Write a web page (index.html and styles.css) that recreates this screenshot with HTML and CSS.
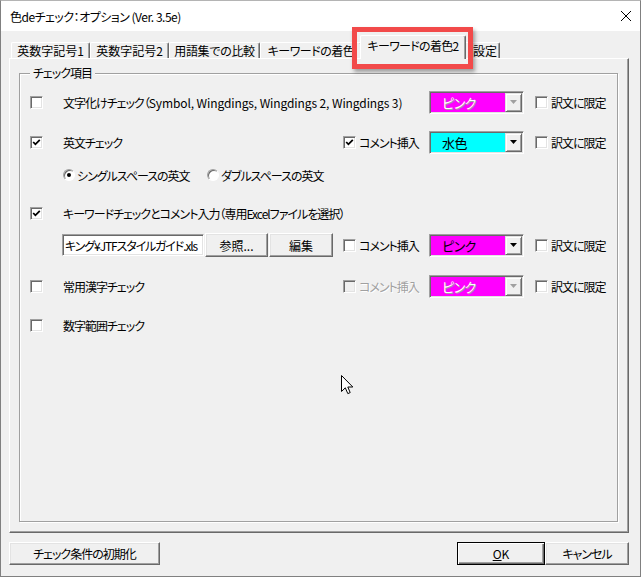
FILE: index.html
```html
<!DOCTYPE html>
<html lang="ja">
<head>
  <meta charset="UTF-8">
  <title>色deチェック：オプション</title>
  <link rel="stylesheet" href="styles.css">
</head>
<body>

  <div class="window">
    <div class="titlebar">
      <span class="title">色deチェック：オプション (Ver. 3.5e)</span>
      <svg class="close" width="12" height="12" viewBox="0 0 12 12"><path d="M1 1L11 11M11 1L1 11" stroke="#000" stroke-width="1"/></svg>
    </div>

    <div class="tabs">
      <div class="tab t1">英数字記号1</div>
      <div class="tab t2">英数字記号2</div>
      <div class="tab t3">用語集での比較</div>
      <div class="tab t4">キーワードの着色</div>
      <div class="tab active">キーワードの着色2</div>
      <div class="tab t6">設定</div>
    </div>

    <div class="panel">
      <div class="group">
        <span class="legend">チェック項目</span>
        <div class="grid">
          <!-- 文字化け -->
          <div class="cell c1"><span class="cb"></span></div>
          <div class="cell c2 wide2">文字化けチェック（<span class="latin">Symbol, Wingdings, Wingdings 2, Wingdings 3)</span></div>
          <div class="cell c4">
            <div class="combo pink disabled"><span class="val">ピンク</span><span class="drop"><svg width="7" height="4" viewBox="0 0 7 4"><path d="M0 0H7L3.5 4Z"/></svg></span></div>
          </div>
          <div class="cell c5"><span class="cb"></span><span class="lbl">訳文に限定</span></div>

          <!-- 英文 -->
          <div class="cell c1"><span class="cb"><svg width="9" height="9" viewBox="0 0 9 9"><polyline points="1.2,4 3.4,6.3 7.8,1.8" fill="none" stroke="#000" stroke-width="1.8"/></svg></span></div>
          <div class="cell c2">英文チェック</div>
          <div class="cell c3"><span class="cb"><svg width="9" height="9" viewBox="0 0 9 9"><polyline points="1.2,4 3.4,6.3 7.8,1.8" fill="none" stroke="#000" stroke-width="1.8"/></svg></span><span class="lbl">コメント挿入</span></div>
          <div class="cell c4">
            <div class="combo cyan"><span class="val">水色</span><span class="drop"><svg width="7" height="4" viewBox="0 0 7 4"><path d="M0 0H7L3.5 4Z"/></svg></span></div>
          </div>
          <div class="cell c5"><span class="cb"></span><span class="lbl">訳文に限定</span></div>

          <!-- スペース -->
          <div class="cell c2 wide4">
            <span class="opt first"><span class="radio on"></span><span class="lbl">シングルスペースの英文</span></span>
            <span class="opt"><span class="radio"></span><span class="lbl">ダブルスペースの英文</span></span>
          </div>

          <!-- キーワード -->
          <div class="cell c1"><span class="cb"><svg width="9" height="9" viewBox="0 0 9 9"><polyline points="1.2,4 3.4,6.3 7.8,1.8" fill="none" stroke="#000" stroke-width="1.8"/></svg></span></div>
          <div class="cell c2 wide4">キーワードチェックとコメント入力（専用Excelファイルを選択）</div>

          <div class="cell c2">
            <div class="field">キング¥JTFスタイルガイド.xls</div>
            <button class="btn browse">参照...</button>
            <button class="btn edit">編集</button>
          </div>
          <div class="cell c3"><span class="cb"></span><span class="lbl">コメント挿入</span></div>
          <div class="cell c4">
            <div class="combo pink"><span class="val">ピンク</span><span class="drop"><svg width="7" height="4" viewBox="0 0 7 4"><path d="M0 0H7L3.5 4Z"/></svg></span></div>
          </div>
          <div class="cell c5"><span class="cb"></span><span class="lbl">訳文に限定</span></div>

          <!-- 常用漢字 -->
          <div class="cell c1"><span class="cb"></span></div>
          <div class="cell c2">常用漢字チェック</div>
          <div class="cell c3 off"><span class="cb"></span><span class="lbl">コメント挿入</span></div>
          <div class="cell c4">
            <div class="combo pink disabled"><span class="val">ピンク</span><span class="drop"><svg width="7" height="4" viewBox="0 0 7 4"><path d="M0 0H7L3.5 4Z"/></svg></span></div>
          </div>
          <div class="cell c5"><span class="cb"></span><span class="lbl">訳文に限定</span></div>

          <!-- 数字範囲 -->
          <div class="cell c1"><span class="cb"></span></div>
          <div class="cell c2">数字範囲チェック</div>
        </div>
      </div>
    </div>

    <div class="footer">
      <button class="btn reset">チェック条件の初期化</button>
      <button class="btn ok default"><u>O</u>K</button>
      <button class="btn cancel">キャンセル</button>
    </div>

    <div class="highlight"></div>
    <svg class="pointer" width="13" height="20" viewBox="0 0 13 20"><path d="M0.5 0.5V16.5L4.3 12.8L6.8 18.6L9.2 17.6L6.8 12H11.8Z" fill="#fff" stroke="#000" stroke-width="1"/></svg>
  </div>

</body>
</html>
```

FILE: styles.css
```css
* {
  box-sizing: border-box;
}

body {
  margin: 0;
  background-color: #fff;
  font-family: "Noto Sans CJK JP", "Noto Sans", sans-serif;
  font-size: 12px;
  color: #000;
  font-feature-settings: "palt";
}

.window {
  position: relative;
  width: 641px;
  height: 577px;
  border: 1px solid #808080;
  border-top-color: #b4b4b4;
  background-color: #f0f0f0;
  display: flex;
  flex-direction: column;
  overflow: hidden;
}

.titlebar {
  height: 30px;
  flex: none;
  background-color: #fff;
  display: flex;
  align-items: center;
  justify-content: space-between;
  padding: 0 8px 0 9px;
}

.title {
  letter-spacing: -0.5px;
}

/* tabs */
.tabs {
  height: 27px;
  flex: none;
  display: flex;
  align-items: flex-end;
  padding-left: 10px;
}

.tab {
  height: 16px;
  display: flex;
  align-items: center;
  justify-content: center;
  border-top: 1px solid #fff;
  border-left: 1px solid #fff;
  border-right: 1px solid #696969;
  box-shadow: inset -1px 0 0 #a0a0a0;
  border-radius: 2px 2px 0 0;
  white-space: nowrap;
  overflow: hidden;
  line-height: 14px;
}

.t1, .t2 { width: 79px; }
.t3 { width: 91px; letter-spacing: -0.3px; }
.t4 { width: 102px; letter-spacing: -0.5px; }
.t6 { width: 36px; justify-content: flex-start; padding-left: 8px; }

.tab.active {
  position: relative;
  z-index: 2;
  width: 106px;
  height: 24px;
  margin: 0 -2px -1px -2px;
  padding-bottom: 3px;
  background-color: #f0f0f0;
  letter-spacing: -0.7px;
}

/* panel */
.panel {
  margin-left: 8px;
  width: 620px;
  height: 475px;
  flex: none;
  border: 1px solid;
  border-color: #fff #696969 #696969 #fff;
  box-shadow: inset -1px -1px 0 #a0a0a0;
  padding: 14px 10px 10px 9px;
  display: flex;
}

.group {
  flex: 1;
  position: relative;
  border: 1px solid #a0a0a0;
  box-shadow: inset 1px 1px 0 #fff, 1px 1px 0 #fff;
  padding-top: 16px;
}

.legend {
  position: absolute;
  top: -9px;
  left: 10px;
  padding: 0 3px;
  line-height: 16px;
  letter-spacing: -1px;
  background-color: #f0f0f0;
}

.grid {
  display: grid;
  grid-template-columns: 43px 280px 86px 106px 1fr;
  grid-template-rows: 40px 33px 38px 32px 41px 39px 24px;
  letter-spacing: -1px;
}

.cell {
  height: 24px;
  display: flex;
  align-items: center;
  white-space: nowrap;
}

.latin {
  letter-spacing: -0.1px;
}

.c1 { grid-column: 1; padding-left: 10px; }
.c2 { grid-column: 2; }
.c3 { grid-column: 3; }
.c4 { grid-column: 4; }
.c5 { grid-column: 5; }
.wide2 { grid-column: 2 / 4; }
.wide4 { grid-column: 2 / 6; }

.lbl {
  margin-left: 3px;
}

.off .lbl {
  color: #a0a0a0;
  text-shadow: 1px 1px 0 #fff;
}

/* checkbox and radio */
.cb {
  width: 13px;
  height: 13px;
  flex: none;
  display: flex;
  align-items: center;
  justify-content: center;
  background-color: #fff;
  border: 1px solid;
  border-color: #a0a0a0 #fff #fff #a0a0a0;
  box-shadow: inset 1px 1px 0 #696969, inset -1px -1px 0 #e3e3e3;
}

.off .cb {
  background-color: #f0f0f0;
}

.opt {
  display: flex;
  align-items: center;
}

.opt.first {
  width: 144px;
}

.radio {
  width: 12px;
  height: 12px;
  flex: none;
  border-radius: 50%;
  background-color: #fff;
  border: 1px solid;
  border-color: #a0a0a0 #fff #fff #a0a0a0;
  box-shadow: inset 1px 1px 0 #696969;
  display: flex;
  align-items: center;
  justify-content: center;
}

.radio.on::after {
  content: "";
  width: 4px;
  height: 4px;
  border-radius: 50%;
  background-color: #000;
}

.opt .lbl {
  margin-left: 2px;
}

/* combo box */
.combo {
  width: 95px;
  height: 23px;
  display: flex;
  align-items: stretch;
  border: 1px solid;
  border-color: #a0a0a0 #fff #fff #a0a0a0;
  box-shadow: inset 1px 1px 0 #696969, inset -1px -1px 0 #e3e3e3;
  padding: 1px;
}

.combo.pink { background-color: #ff00ff; }
.combo.cyan { background-color: #00ffff; }

.val {
  flex: 1;
  display: flex;
  align-items: center;
  padding-left: 11px;
  font-size: 13px;
  letter-spacing: -0.5px;
}

.disabled .val {
  color: #fff;
  text-shadow: 1px 1px 0 #a0a0a0;
}

.drop {
  width: 17px;
  flex: none;
  display: flex;
  align-items: center;
  justify-content: center;
  background-color: #f0f0f0;
  border: 1px solid;
  border-color: #e3e3e3 #696969 #696969 #e3e3e3;
  box-shadow: inset 1px 1px 0 #fff, inset -1px -1px 0 #a0a0a0;
}

.drop svg {
  fill: #000;
}

.disabled .drop svg {
  fill: #a0a0a0;
}

/* file field and buttons */
.field {
  width: 142px;
  height: 22px;
  margin-left: -1px;
  display: flex;
  align-items: center;
  overflow: hidden;
  background-color: #fff;
  border: 1px solid;
  border-color: #a0a0a0 #fff #fff #a0a0a0;
  box-shadow: inset 1px 1px 0 #696969, inset -1px -1px 0 #e3e3e3;
  padding: 0 2px;
  letter-spacing: -1.1px;
}

.btn {
  height: 23px;
  padding: 0;
  font-family: inherit;
  font-size: 12px;
  color: #000;
  background-color: #f0f0f0;
  border: 1px solid;
  border-color: #fff #696969 #696969 #fff;
  box-shadow: inset -1px -1px 0 #a0a0a0, inset 1px 1px 0 #e3e3e3;
  font-feature-settings: "palt";
  letter-spacing: -1px;
}

.browse {
  width: 63px;
  height: 24px;
  margin-left: 1px;
  letter-spacing: 0;
}

.edit {
  width: 64px;
  height: 24px;
  margin-left: 1px;
  letter-spacing: 0;
}

.footer {
  height: 43px;
  flex: none;
  display: flex;
  align-items: flex-start;
  padding: 9px 11px 0 8px;
}

.reset {
  width: 151px;
}

.ok {
  width: 88px;
  margin-left: auto;
  letter-spacing: 0;
}

.btn.default {
  border-color: #000;
  box-shadow: inset 1px 1px 0 #fff, inset -1px -1px 0 #696969, inset -2px -2px 0 #a0a0a0;
}

.cancel {
  width: 84px;
}

/* overlays */
.highlight {
  position: absolute;
  left: 351px;
  top: 26px;
  width: 121px;
  height: 42px;
  border: 5px solid #f24a4a;
  box-shadow: 2px 3px 4px rgba(0, 0, 0, 0.35);
  z-index: 3;
}

.pointer {
  position: absolute;
  left: 340px;
  top: 374px;
}
```
